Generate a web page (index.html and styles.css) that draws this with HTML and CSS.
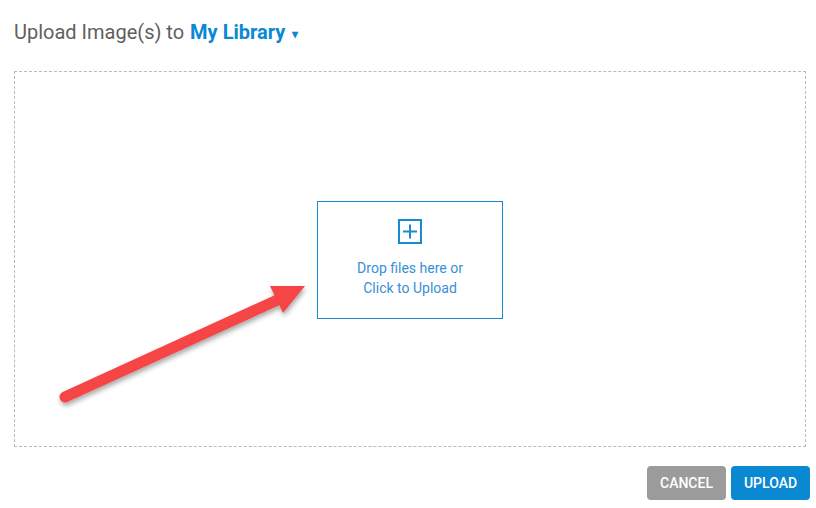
FILE: index.html
```html
<!DOCTYPE html>
<html lang="en">
<head>
    <meta charset="UTF-8">
    <title>Upload Images</title>
    <link rel="stylesheet" href="styles.css">
</head>
<body>

    <div class="uploader">
        <h1 class="title">Upload Image(s) to <span class="library">My Library <span class="caret">&#9662;</span></span></h1>

        <div class="dropzone">
            <div class="drop-target">
                <svg class="plus" width="24" height="25" viewBox="0 0 24 25">
                    <rect x="1" y="1" width="22" height="23" fill="none" stroke="#1a8ad3" stroke-width="2"/>
                    <path d="M5 12.5h14M12 5.5v14" stroke="#1a8ad3" stroke-width="2"/>
                </svg>
                <p>Drop files here or<br>Click to Upload</p>
            </div>
        </div>

        <div class="actions">
            <button class="cancel">CANCEL</button>
            <button class="upload">UPLOAD</button>
        </div>
    </div>

    <!-- annotation arrow -->
    <svg class="arrow" width="816" height="508" viewBox="0 0 816 508">
        <defs>
            <filter id="shadow" x="-10%" y="-10%" width="130%" height="140%">
                <feDropShadow dx="1" dy="3" stdDeviation="2.5" flood-color="#000" flood-opacity="0.35"/>
            </filter>
        </defs>
        <g filter="url(#shadow)">
            <line x1="65" y1="397" x2="284" y2="297" stroke="#f54545" stroke-width="11" stroke-linecap="round"/>
            <polygon points="270,286 305,286 283,313" fill="#f54545"/>
        </g>
    </svg>

</body>
</html>
```

FILE: styles.css
```css
body {
    margin: 0;
    font-family: Roboto, "Liberation Sans", sans-serif;
    background: #fff;
    width: 816px;
    height: 508px;
    overflow: hidden;
}
.uploader {
    padding: 18px 6px 0 14px;
}
.title {
    margin: 0;
    font-size: 20px;
    line-height: 28px;
    font-weight: 400;
    color: #5f5f5f;
}
.library {
    color: #0b88d4;
    font-weight: 700;
    margin-left: 1px;
}
.caret {
    font-size: 12px;
    vertical-align: 1px;
    margin-left: 2px;
}
.dropzone {
    margin-top: 23px;
    width: 790px;
    height: 372px;
    padding-top: 2px;
    border: 1px dashed #bbb;
    display: flex;
    justify-content: center;
    align-items: center;
}
.drop-target {
    width: 186px;
    height: 118px;
    border: 1px solid #1a8ad3;
    display: flex;
    flex-direction: column;
    align-items: center;
    padding-top: 17px;
    box-sizing: border-box;
}
.drop-target p {
    margin: 14px 0 0;
    font-size: 14px;
    line-height: 20px;
    color: #3a8fd5;
    text-align: center;
}
.actions {
    display: flex;
    justify-content: flex-end;
    gap: 5px;
    margin-top: 19px;
}
button {
    width: 79px;
    height: 34px;
    border: none;
    border-radius: 4px;
    font-family: Roboto, "Liberation Sans", sans-serif;
    font-size: 14px;
    font-weight: 500;
    color: #fff;
    cursor: pointer;
}
button.cancel { background: #9b9b9b; }
button.upload { background: #0b88d2; }
.arrow {
    position: absolute;
    left: 0;
    top: 0;
    pointer-events: none;
}
```
